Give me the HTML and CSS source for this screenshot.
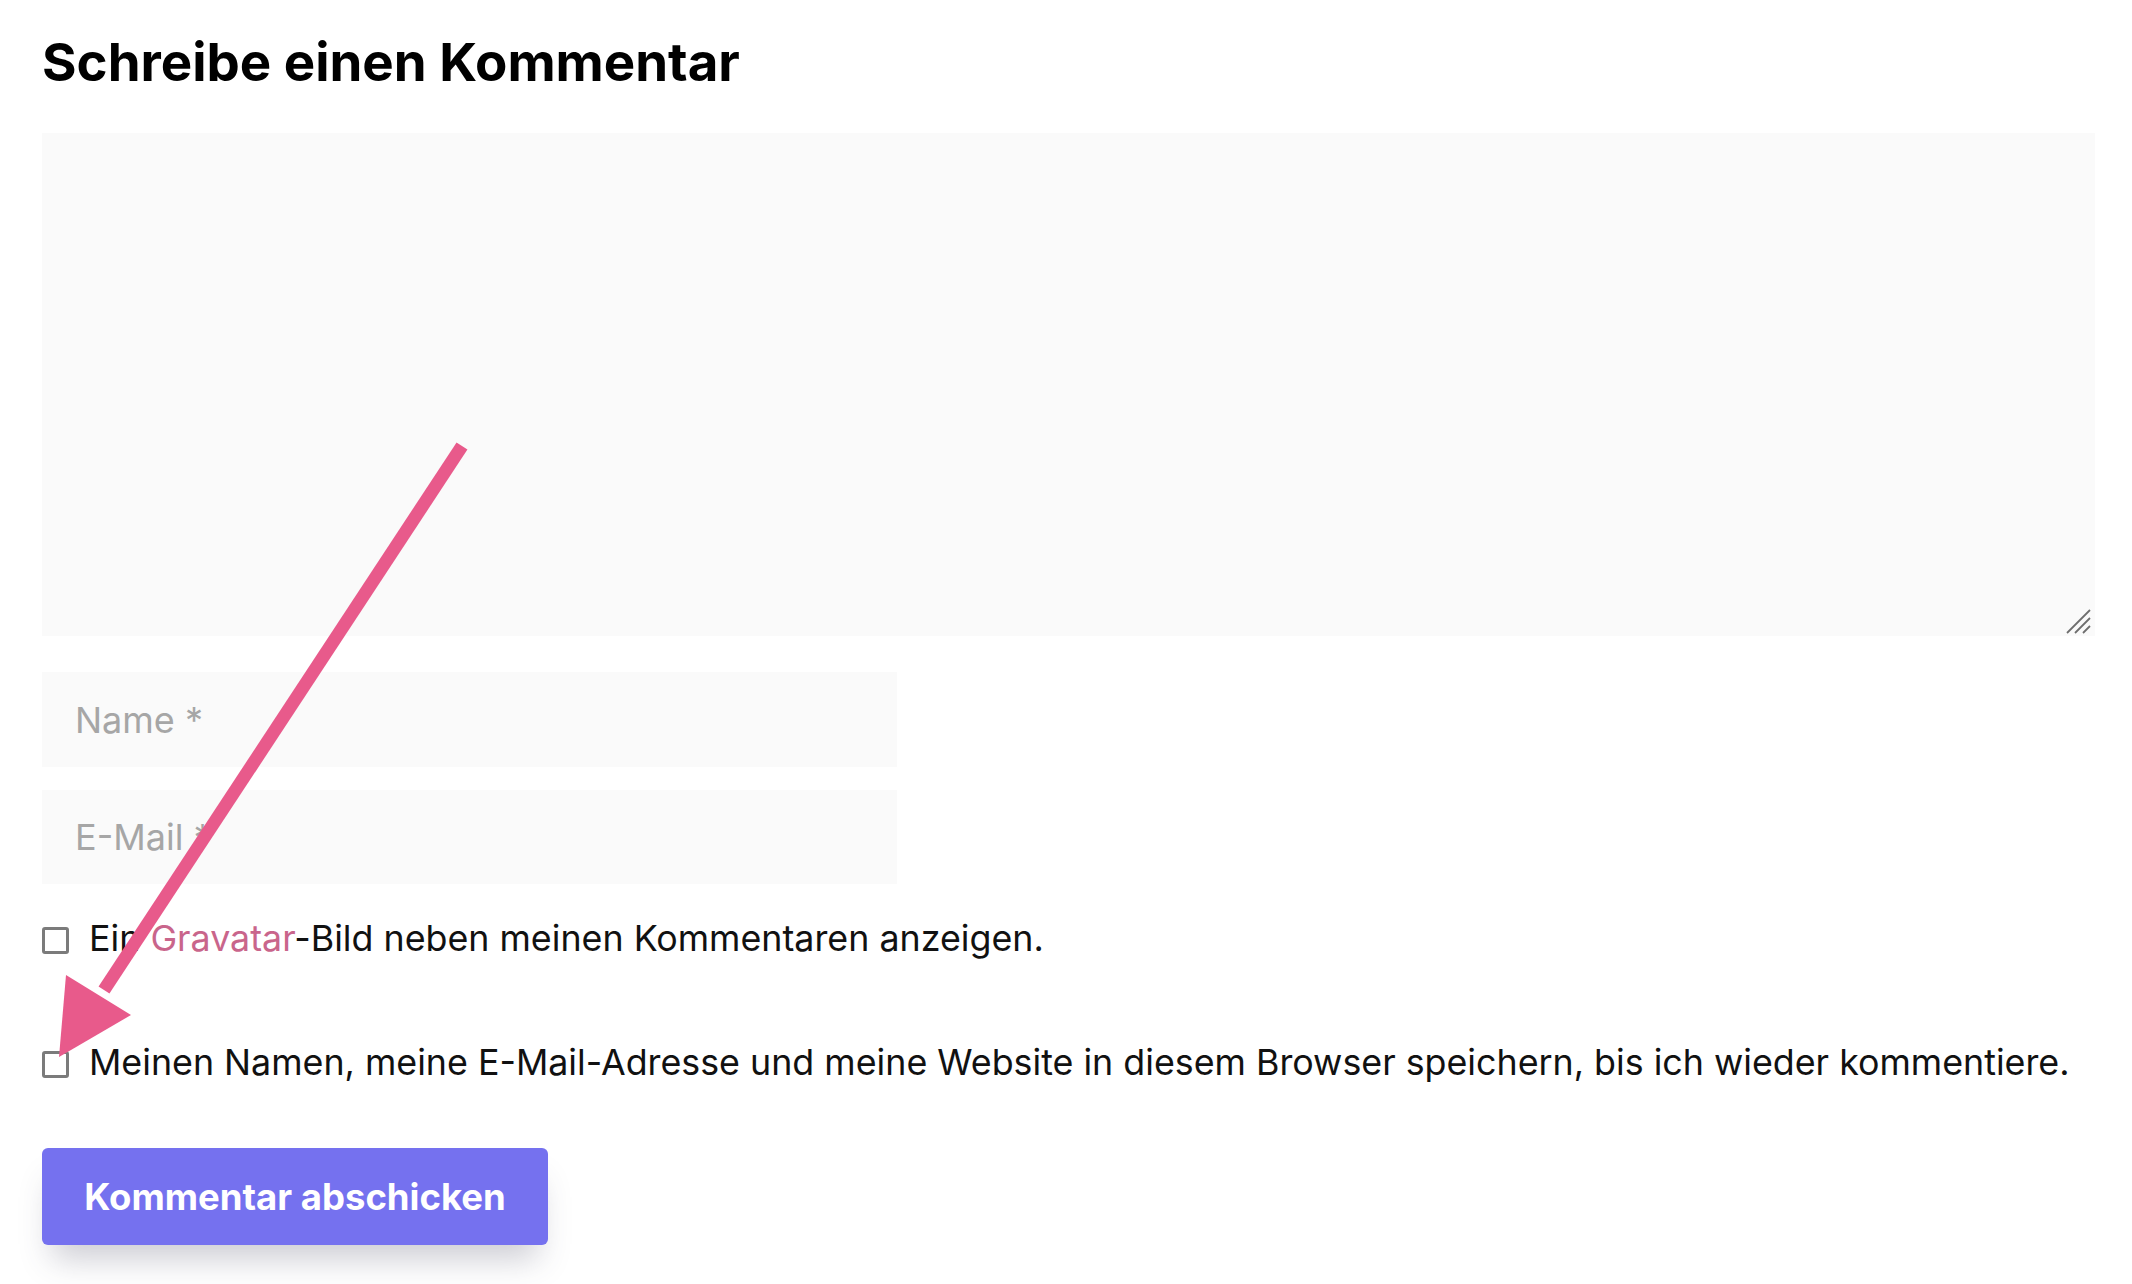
FILE: index.html
```html
<!DOCTYPE html>
<html lang="de">
<head>
<meta charset="utf-8">
<title>Schreibe einen Kommentar</title>
<link rel="stylesheet" href="styles.css">
</head>
<body>
<div class="page">
  <h3 class="title">Schreibe einen Kommentar</h3>
  <form class="form">
    <div class="textarea-wrap">
      <textarea class="comment"></textarea>
      <svg class="grip" width="28" height="28" viewBox="0 0 28 28">
        <line x1="3" y1="26" x2="26" y2="3" stroke="#6e6e6e" stroke-width="1.8"/>
        <line x1="11" y1="26" x2="26" y2="11" stroke="#6e6e6e" stroke-width="1.8"/>
        <line x1="19" y1="26" x2="26" y2="19" stroke="#6e6e6e" stroke-width="1.8"/>
      </svg>
    </div>
    <input class="field field-name" type="text" placeholder="Name *">
    <input class="field field-mail" type="text" placeholder="E-Mail *">
    <label class="check check-first">
      <input class="box" type="checkbox">
      <span>Ein <a class="link" href="#">Gravatar</a>-Bild neben meinen Kommentaren anzeigen.</span>
    </label>
    <label class="check check-second">
      <input class="box" type="checkbox">
      <span>Meinen Namen, meine E-Mail-Adresse und meine Website in diesem Browser speichern, bis ich wieder kommentiere.</span>
    </label>
    <button class="submit" type="button">Kommentar abschicken</button>
  </form>
</div>
<svg class="annotation" width="2132" height="1284" viewBox="0 0 2132 1284">
  <line x1="462" y1="446" x2="104" y2="990" stroke="#e85a8b" stroke-width="13" stroke-linecap="butt"/>
  <polygon points="59,1057 66,975 131,1015" fill="#e85a8b"/>
</svg>
</body>
</html>
```

FILE: styles.css
```css
html, body {
  margin: 0;
  padding: 0;
  background: #ffffff;
}

body {
  font-family: "Inter", "Liberation Sans", sans-serif;
  color: #111111;
  position: relative;
  width: 2132px;
  height: 1284px;
  overflow: hidden;
}

.page {
  padding: 31px 37px 0 42px;
}

.title {
  margin: 0;
  font-size: 52.8px;
  line-height: 62px;
  font-weight: 700;
  color: #000000;
}

.form {
  display: flex;
  flex-direction: column;
  align-items: flex-start;
  margin-top: 40px;
}

.textarea-wrap {
  position: relative;
  width: 100%;
  height: 503px;
}

.comment {
  display: block;
  width: 100%;
  height: 503px;
  box-sizing: border-box;
  border: none;
  background: #fafafa;
  resize: none;
  outline: none;
  margin: 0;
}

.grip {
  position: absolute;
  right: 3px;
  bottom: 1px;
}

.field {
  display: block;
  box-sizing: border-box;
  width: 855px;
  border: none;
  outline: none;
  background: #fafafa;
  margin: 0;
  padding: 0 0 0 33px;
  font-family: "Inter", "Liberation Sans", sans-serif;
  font-size: 36px;
  color: #111111;
}

.field::placeholder {
  color: #a6a6a6;
}

.field-name {
  margin-top: 36px;
  height: 95px;
}

.field-mail {
  margin-top: 23px;
  height: 94px;
}

.check {
  display: flex;
  align-items: flex-start;
  font-size: 35.8px;
  line-height: 44px;
  color: #111111;
}

.check-first {
  margin-top: 32px;
}

.check-second {
  margin-top: 80px;
}

.box {
  appearance: none;
  -webkit-appearance: none;
  flex: none;
  width: 27px;
  height: 27px;
  box-sizing: border-box;
  border: 3px solid #7b7b7b;
  border-radius: 3px;
  background: #ffffff;
  margin: 11px 20px 0 0;
}

.link {
  color: #c9658b;
  text-decoration: none;
}

.submit {
  margin-top: 64px;
  width: 506px;
  height: 97px;
  border: none;
  border-radius: 6px;
  background: #7571ef;
  color: #ffffff;
  font-family: "Inter", "Liberation Sans", sans-serif;
  font-size: 36.5px;
  font-weight: 700;
  box-shadow: 0 24px 32px -10px rgba(60, 60, 90, 0.26);
  padding: 0;
}

.annotation {
  position: absolute;
  top: 0;
  left: 0;
  pointer-events: none;
}
```
